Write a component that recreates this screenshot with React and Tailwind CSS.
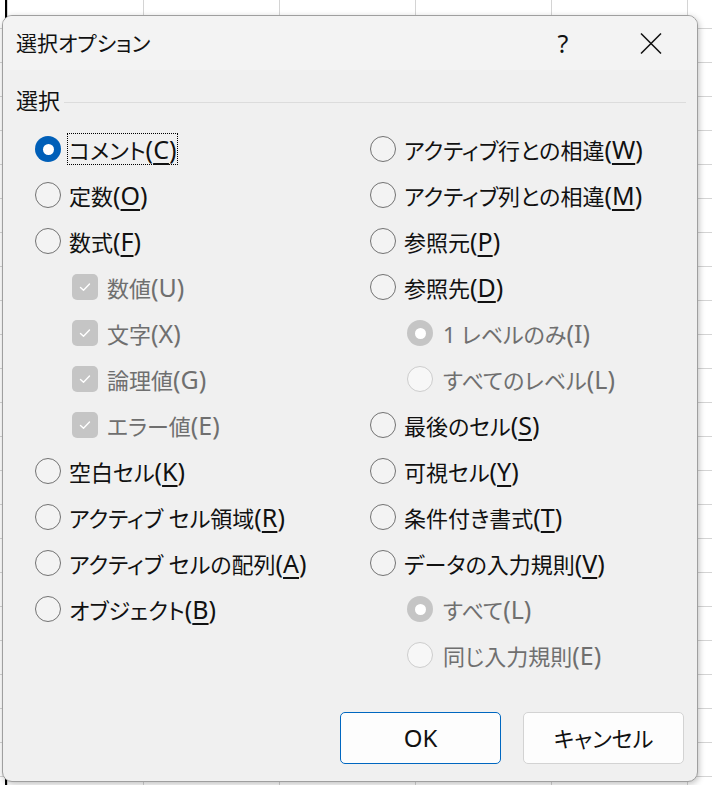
import React from "react";

function Radio({ state }) {
  if (state === "checked")
    return (
      <span className="w-[26px] h-[26px] rounded-full bg-[#005fb8] flex items-center justify-center shrink-0">
        <span className="w-[11px] h-[11px] rounded-full bg-white" />
      </span>
    );
  if (state === "dchecked")
    return (
      <span className="w-[26px] h-[26px] rounded-full bg-[#c5c5c5] flex items-center justify-center shrink-0">
        <span className="w-[11px] h-[11px] rounded-full bg-white" />
      </span>
    );
  if (state === "dunchecked")
    return <span className="w-[26px] h-[26px] rounded-full border-[1.5px] border-[#cdcdcd] bg-[#f7f7f7] shrink-0" />;
  return <span className="w-[26px] h-[26px] rounded-full border-[1.5px] border-[#727272] bg-[#f3f3f3] shrink-0" />;
}

function Check() {
  return (
    <span className="w-[26px] h-[26px] rounded-[5px] bg-[#c5c5c5] flex items-center justify-center shrink-0">
      <svg width="14" height="14" viewBox="0 0 14 14" fill="none">
        <path d="M2.5 7.5 L5.5 10.3 L11.5 4" stroke="white" strokeWidth="1.4" strokeLinecap="round" strokeLinejoin="round" />
      </svg>
    </span>
  );
}

function Label({ pre, key_, disabled, focus }) {
  const color = disabled ? "text-[#6f6f6f]" : "text-[#111]";
  return (
    <span
      className={
        "leading-none whitespace-nowrap flex items-center h-[32px] " +
        color +
        (focus ? " border border-dotted border-black px-[1px] -ml-[2px]" : "")
      }
    >
      <span className="text-[22px] leading-none">
        {pre}
        <span className="text-[25px]">
          (
          {disabled ? (
            key_
          ) : (
            <span className="underline decoration-[1.5px] underline-offset-[4px]">{key_}</span>
          )}
          )
        </span>
      </span>
    </span>
  );
}

function RadioRow({ state, pre, k, disabled, focus, indent }) {
  return (
    <div className={"h-[46px] flex items-center " + (indent ? "pl-[37px] gap-[10px]" : "gap-[8px]")}>
      <Radio state={state} />
      <Label pre={pre} key_={k} disabled={disabled} focus={focus} />
    </div>
  );
}

function CheckRow({ pre, k }) {
  return (
    <div className="h-[46px] flex items-center pl-[37px] gap-[9px]">
      <Check />
      <Label pre={pre} key_={k} disabled />
    </div>
  );
}

export default function App() {
  return (
    <div className="w-[712px] h-[785px] overflow-hidden relative bg-white bg-[linear-gradient(to_right,#d4d4d4_1px,transparent_1px),linear-gradient(to_bottom,#d4d4d4_1px,transparent_1px)] bg-[size:136px_34px] bg-[position:7px_28px] font-['Noto_Sans','Noto_Sans_CJK_JP',sans-serif] [font-feature-settings:'palt'] pt-[15px] pl-[2px]">
      <div className="absolute left-[5px] top-0 w-[2px] h-[785px] bg-black" />
      <div className="relative w-[696px] h-[767px] rounded-[10px] border border-[#9f9f9f] bg-[#f0f0f0] shadow-[1px_2px_6px_rgba(0,0,0,0.25)] overflow-hidden flex flex-col">
        {/* title bar */}
        <div className="h-[54px] bg-[#f3f3f3] flex items-center pl-[13px] shrink-0">
          <span className="text-[21px] leading-none text-[#111] flex-1">選択オプション</span>
          <span className="text-[25px] leading-none text-[#111] w-[30px] text-center mr-[62px]">?</span>
          <span className="w-[22px] h-[22px] mr-[35px] flex items-center justify-center">
            <svg width="22" height="21" viewBox="0 0 22 21" fill="none">
              <path d="M1 0.5 L21 20.5 M21 0.5 L1 20.5" stroke="#111" strokeWidth="1.5" />
            </svg>
          </span>
        </div>
        {/* body */}
        <div className="flex-1 flex flex-col pt-[15px]">
          <div className="h-[30px] flex items-center pl-[13px] pr-[11px] gap-[4px]">
            <span className="text-[22px] leading-none text-[#111]">選択</span>
            <span className="flex-1 h-px bg-[#dcdcdc] mt-[4px]" />
          </div>
          <div className="flex mt-[11px]">
            <div className="w-[367px] pl-[32px] flex flex-col">
              <RadioRow state="checked" pre="コメント" k="C" focus />
              <RadioRow pre="定数" k="O" />
              <RadioRow pre="数式" k="F" />
              <CheckRow pre="数値" k="U" />
              <CheckRow pre="文字" k="X" />
              <CheckRow pre="論理値" k="G" />
              <CheckRow pre="エラー値" k="E" />
              <RadioRow pre="空白セル" k="K" />
              <RadioRow pre="アクティブ セル領域" k="R" />
              <RadioRow pre="アクティブ セルの配列" k="A" />
              <RadioRow pre="オブジェクト" k="B" />
            </div>
            <div className="flex-1 flex flex-col">
              <RadioRow pre="アクティブ行との相違" k="W" />
              <RadioRow pre="アクティブ列との相違" k="M" />
              <RadioRow pre="参照元" k="P" />
              <RadioRow pre="参照先" k="D" />
              <RadioRow state="dchecked" pre="1 レベルのみ" k="I" disabled indent />
              <RadioRow state="dunchecked" pre="すべてのレベル" k="L" disabled indent />
              <RadioRow pre="最後のセル" k="S" />
              <RadioRow pre="可視セル" k="Y" />
              <RadioRow pre="条件付き書式" k="T" />
              <RadioRow pre="データの入力規則" k="V" />
              <RadioRow state="dchecked" pre="すべて" k="L" disabled indent />
              <RadioRow state="dunchecked" pre="同じ入力規則" k="E" disabled indent />
            </div>
          </div>
          <div className="flex justify-end gap-[22px] pr-[13px] mt-[34px]">
            <button className="w-[161px] h-[52px] rounded-[5px] border border-[#0067c0] bg-[#fdfdfd] text-[24px] text-[#111] leading-none">
              OK
            </button>
            <button className="w-[161px] h-[52px] rounded-[5px] border border-[#d3d3d3] bg-[#fdfdfd] text-[22px] text-[#111] leading-none">
              キャンセル
            </button>
          </div>
        </div>
      </div>
    </div>
  );
}
